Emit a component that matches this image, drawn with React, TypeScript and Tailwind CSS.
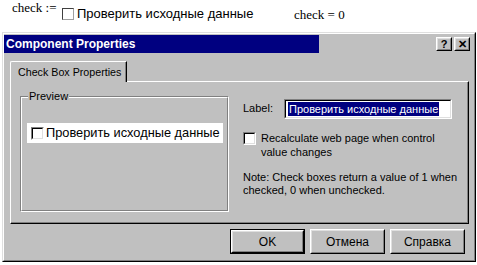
const ui = { fontFamily: '"Liberation Sans", Arial, sans-serif' }
const serif = { fontFamily: '"Liberation Serif", "Times New Roman", serif' }

function Box({ white = false }: { white?: boolean }) {
  return (
    <span
      className={`inline-block w-[13px] h-[13px] shrink-0 border-t border-l border-t-[#808080] border-l-[#808080] border-b border-r border-b-white border-r-white ${white ? 'bg-white' : ''}`}
    >
      <span className="block w-full h-full border-t border-l border-t-black border-l-black border-b border-r border-b-[#dfdfdf] border-r-[#dfdfdf]" />
    </span>
  )
}

function SmallBox() {
  return (
    <span className="inline-block w-[12px] h-[12px] shrink-0 border border-t-[#404040] border-l-[#404040] border-b-[#a0a0a0] border-r-[#a0a0a0] bg-white" />
  )
}

function Btn({ label, def = false }: { label: string; def?: boolean }) {
  return (
    <div className={`w-[75px] h-[25px] ${def ? 'border border-black' : ''}`}>
      <div className="w-full h-full border border-t-white border-l-white border-b-black border-r-black">
        <div className="w-full h-full border border-t-[#dfdfdf] border-l-[#dfdfdf] border-b-[#808080] border-r-[#808080] flex items-center justify-center text-[12px] text-black">
          {label}
        </div>
      </div>
    </div>
  )
}

function TitleBtn({ children }: { children: React.ReactNode }) {
  return (
    <div className="w-[16px] h-[14px] border border-t-white border-l-white border-b-black border-r-black">
      <div className="w-full h-full border border-t-[#dfdfdf] border-l-[#dfdfdf] border-b-[#808080] border-r-[#808080] flex items-center justify-center text-[11px] font-bold leading-none text-black">
        {children}
      </div>
    </div>
  )
}

export default function App() {
  return (
    <div className="w-[477px] h-[265px] bg-white overflow-hidden whitespace-nowrap" style={ui}>
      {/* worksheet strip */}
      <div className="relative h-[32px]">
        <span className="absolute left-[12px] top-[1px] text-[13px] leading-[13px] text-black" style={serif}>check :=</span>
        <span className="absolute left-[62px] top-[7px] flex items-center gap-[3px]">
          <SmallBox />
          <span className="text-[13px] leading-none text-black">Проверить исходные данные</span>
        </span>
        <span className="absolute left-[294px] top-[5px] text-[13px] text-black" style={serif}>check = 0</span>
      </div>

      {/* dialog */}
      <div className="ml-[2px] w-[474px] h-[230px] border-t border-l border-t-[#dfdfdf] border-l-[#dfdfdf] border-b border-r border-b-black border-r-black">
        <div className="w-full h-full bg-[#c0c0c0] border-t border-l border-t-white border-l-white border-b border-r border-b-[#808080] border-r-[#808080] flex flex-col">
          <div className="mt-[1px] h-[18px] flex items-center">
            <div className="w-[315px] h-full bg-[#000080] flex items-center pl-[2px]">
              <span className="text-white font-bold text-[12px]">Component Properties</span>
            </div>
            <div className="ml-auto mr-[4px] flex gap-[2px]">
              <TitleBtn>?</TitleBtn>
              <TitleBtn>✕</TitleBtn>
            </div>
          </div>

          {/* tabs */}
          <div className="ml-[6px] mt-[8px] w-[459px]">
            <div className="relative z-10 w-[117px] h-[21px] border-t border-l border-white rounded-tl-[2px] border-r border-r-black bg-[#c0c0c0] -mb-[1px]">
              <div className="h-full border-r border-r-[#808080] flex items-center pl-[7px] text-[10.7px] text-black">
                Check Box Properties
              </div>
            </div>
            <div className="h-[143px] border-t border-l border-white border-b border-r border-b-black border-r-black">
              <div className="h-full border-b border-r border-b-[#808080] border-r-[#808080] flex">
                {/* preview group */}
                <div className="ml-[9px] mt-[14px] w-[209px] h-[116px] relative border border-t-[#808080] border-l-[#808080] border-b-white border-r-white">
                  <div className="w-full h-full border border-t-white border-l-white border-b-[#808080] border-r-[#808080] pt-[25px] pl-[5px]">
                    <div className="w-[196px] h-[20px] bg-white flex items-center pl-[4px] gap-[2px] overflow-hidden">
                      <Box />
                      <span className="text-[12.8px] leading-none text-black">Проверить исходные данные</span>
                    </div>
                  </div>
                  <span className="absolute left-[7px] top-[-8px] bg-[#c0c0c0] px-[1px] text-[11px] leading-[14px] text-black">Preview</span>
                </div>

                {/* options */}
                <div className="ml-[14px] mt-[16px] w-[222px] text-[11px] text-black">
                  <div className="flex items-center h-[21px]">
                    <span className="w-[41px]">Label:</span>
                    <div className="w-[168px] h-[20px] border border-t-[#808080] border-l-[#808080] border-b-white border-r-white">
                      <div className="w-full h-full border border-t-black border-l-black border-b-[#dfdfdf] border-r-[#dfdfdf] bg-white flex items-center pl-[2px] overflow-hidden">
                        <span className="bg-[#000080] text-white text-[11px] leading-[14px] px-[1px]">Проверить исходные данные</span>
                      </div>
                    </div>
                  </div>
                  <div className="flex mt-[12px] gap-[5px]">
                    <div className="mt-[1px]"><Box white /></div>
                    <div className="leading-[14px]">Recalculate web page when control<br />value changes</div>
                  </div>
                  <div className="mt-[12px] leading-[13px]">
                    Note: Check boxes return a value of 1 when<br />checked, 0 when unchecked.
                  </div>
                </div>
              </div>
            </div>
          </div>

          {/* buttons */}
          <div className="mt-[5px] ml-[226px] flex gap-[5px]">
            <Btn label="OK" def />
            <Btn label="Отмена" />
            <Btn label="Справка" />
          </div>
        </div>
      </div>
    </div>
  )
}
